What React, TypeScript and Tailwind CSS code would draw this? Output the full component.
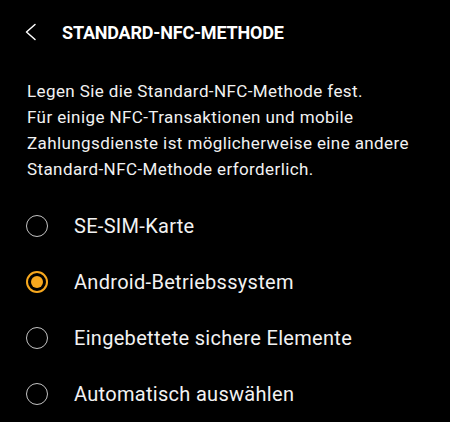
const OPTIONS = [
  { label: "SE-SIM-Karte", selected: false },
  { label: "Android-Betriebssystem", selected: true },
  { label: "Eingebettete sichere Elemente", selected: false },
  { label: "Automatisch auswählen", selected: false },
];

function Radio({ selected }: { selected: boolean }) {
  if (selected) {
    return (
      <div className="w-[22px] h-[22px] rounded-full border-2 border-[#f7a81e] flex items-center justify-center">
        <div className="w-[12px] h-[12px] rounded-full bg-[#f7a81e]" />
      </div>
    );
  }
  return <div className="w-[22px] h-[22px] rounded-full border-[1.5px] border-[#c4c4c4]" />;
}

export default function App() {
  return (
    <div className="w-[450px] h-[422px] bg-black text-white overflow-hidden" style={{ fontFamily: "Roboto, 'Noto Sans', sans-serif" }}>
      {/* Header */}
      <div className="flex items-center h-[64px] pl-[24px]">
        <svg width="14" height="18" viewBox="0 0 14 18" className="mr-[24px]">
          <path d="M11 1.5 L2.5 9 L11 16.5" fill="none" stroke="#fff" strokeWidth="1.5" strokeLinecap="round" strokeLinejoin="round" />
        </svg>
        <h1 className="text-[18px] font-bold tracking-[-0.2px]">STANDARD-NFC-METHODE</h1>
      </div>

      {/* Description */}
      <p className="px-[27px] pt-[14px] text-[17px] leading-[26px] tracking-[0.4px] text-[#f2f2f2]">
        Legen Sie die Standard-NFC-Methode fest.
        <br />
        Für einige NFC-Transaktionen und mobile Zahlungsdienste ist möglicherweise eine andere Standard-NFC-Methode erforderlich.
      </p>

      {/* Options */}
      <div className="mt-[16px] flex flex-col">
        {OPTIONS.map((o) => (
          <div key={o.label} className="flex items-center h-[56px] pl-[26px]">
            <Radio selected={o.selected} />
            <span className="ml-[26px] text-[20px] tracking-[0.3px] text-[#f2f2f2]">{o.label}</span>
          </div>
        ))}
      </div>
    </div>
  );
}
